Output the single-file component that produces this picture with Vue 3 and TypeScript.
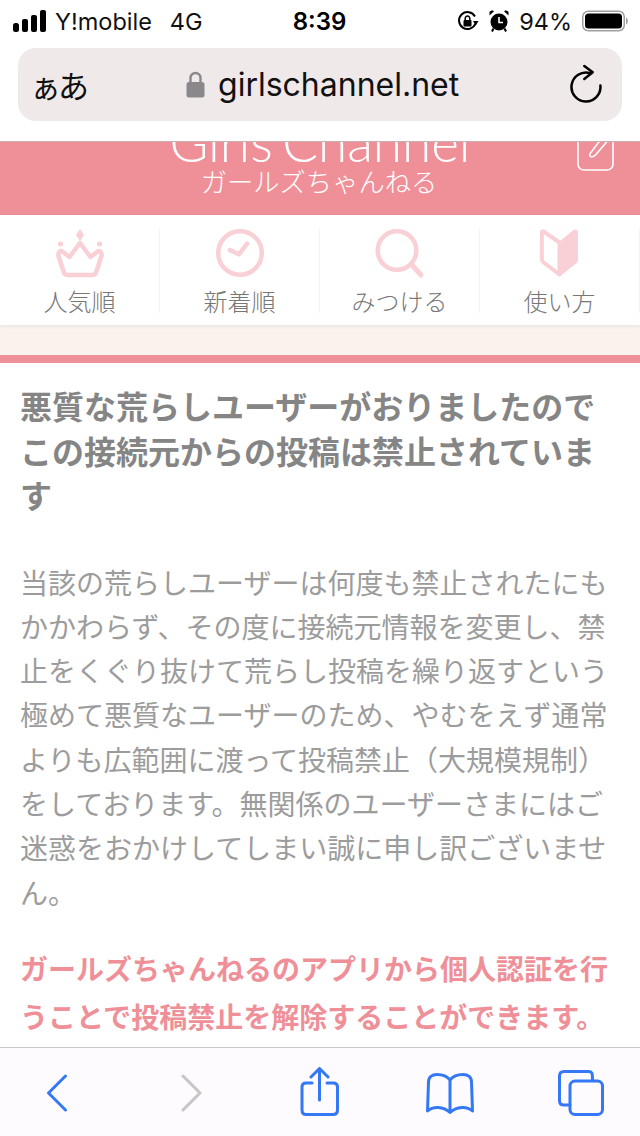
<script setup lang="ts">
const navItems = [
  { label: '人気順', icon: 'crown' },
  { label: '新着順', icon: 'clock' },
  { label: 'みつける', icon: 'search' },
  { label: '使い方', icon: 'guide' },
]
</script>

<template>
  <div class="page">
    <div class="browser-top">
      <div class="status">
        <div class="status-left">
          <svg class="signal" width="34" height="22" viewBox="0 0 34 22" fill="#000">
            <rect x="0" y="13" width="6" height="9" rx="2.500" />
            <rect x="9" y="9" width="6" height="13" rx="2" />
            <rect x="18" y="5" width="6" height="17" rx="2" />
            <rect x="27" y="0" width="6" height="22" rx="2" />
          </svg>
          <span class="carrier">Y!mobile</span>
          <span class="net">4G</span>
        </div>
        <div class="time">8:39</div>
        <div class="status-right">
          <svg width="22" height="22" viewBox="0 0 22 22" fill="none">
            <path d="M18.500 13.500A8.500 8.500 0 1 1 18 6.500" stroke="#000" stroke-width="2" />
            <path d="M16 11h5.500L18.800 15.500z" fill="#000" />
            <rect x="6.500" y="10" width="8" height="6.500" rx="1" fill="#000" />
            <path d="M8.200 10V8.400a2.300 2.300 0 0 1 4.600 0V10" stroke="#000" stroke-width="1.500" />
          </svg>
          <svg class="alarm" width="20" height="22" viewBox="0 0 20 22">
            <circle cx="10" cy="12" r="8.500" fill="#000" />
            <path d="M0.500 5.500 5 1.200 3.200 0.300 0.500 1.800zM19.500 5.500 15 1.200 16.800 0.300 19.500 1.800z" fill="#000" />
            <path d="M10 7V12.500H14" stroke="#fff" stroke-width="1.600" fill="none" />
            <path d="M4.500 18.500 3 21.500M15.500 18.500 17 21.500" stroke="#000" stroke-width="2" />
          </svg>
          <span class="pct">94%</span>
          <svg width="47" height="22" viewBox="0 0 47 22" fill="none">
            <rect x="0.750" y="1.250" width="41.500" height="19.500" rx="5.500" stroke="#a0a0a0" stroke-width="1.500" />
            <rect x="3" y="3.500" width="37" height="15" rx="3.500" fill="#000" />
            <path d="M44 7.500c1.200.4 1.800 1.800 1.800 3.500s-.6 3.100-1.800 3.500z" fill="#a0a0a0" />
          </svg>
        </div>
      </div>
      <div class="urlbar">
        <span class="aa">ぁあ</span>
        <div class="address">
          <svg width="19" height="27" viewBox="0 0 19 27" fill="none">
            <path d="M4.500 12V7a5 5 0 0 1 10 0v5" stroke="#8a888b" stroke-width="2.400" />
            <rect x="0.500" y="11" width="18" height="15.500" rx="2.500" fill="#8a888b" />
          </svg>
          <span class="domain">girlschannel.net</span>
        </div>
        <svg class="reload" width="32" height="41" viewBox="0 0 32 41" fill="none">
          <path d="M30.400 21.500A14.500 14.500 0 1 1 20 9" stroke="#000" stroke-width="2.500" stroke-linecap="round" />
          <path d="M14.300 2 22.700 8.300 14.300 15" stroke="#000" stroke-width="2.500" stroke-linecap="round" stroke-linejoin="round" />
        </svg>
      </div>
    </div>

    <header class="site-header">
      <div class="logo-block">
        <div class="logo-en">Girls Channel</div>
        <div class="logo-ja">ガールズちゃんねる</div>
      </div>
      <svg class="post-icon" width="38" height="60" viewBox="0 0 38 60" fill="none">
        <rect x="1" y="19" width="35" height="39" rx="6" stroke="#fff" stroke-width="1.600" />
        <path d="M13.500 44.500C12.500 44 12.500 42.500 13.500 41L28 22 33 26 18.500 43C17 44.500 15 45 13.500 44.500Z" stroke="#fff" stroke-width="1.600" stroke-linejoin="round" />
      </svg>
    </header>

    <nav class="site-nav">
      <div v-for="item in navItems" :key="item.label" class="nav-item">
        <svg class="nav-icon" width="50" height="50" viewBox="0 0 50 50" fill="none">
          <template v-if="item.icon === 'crown'">
            <path d="M25 0 29 6 25 12 21 6z" fill="#f8d0d5" />
            <circle cx="5.500" cy="15" r="2.500" fill="#f8d0d5" />
            <circle cx="44.500" cy="15" r="2.500" fill="#f8d0d5" />
            <path d="M13 46C10 46 8.800 44.500 8.400 42L3.500 27C2.800 23 5.500 21 8 23L14.500 28 25 14 35.500 28 42 23C44.500 21 47.200 23 46.500 27L41.600 42C41.200 44.500 40 46 37 46Z" stroke="#f8d0d5" stroke-width="4.500" stroke-linejoin="round" />
          </template>
          <template v-else-if="item.icon === 'clock'">
            <circle cx="25" cy="24" r="21.800" stroke="#f8d0d5" stroke-width="4.500" />
            <path d="M14.800 21 23.800 25.300 32.200 14.700" stroke="#f8d0d5" stroke-width="4.500" stroke-linecap="round" stroke-linejoin="round" />
          </template>
          <template v-else-if="item.icon === 'search'">
            <circle cx="22" cy="21.500" r="19.300" stroke="#f8d0d5" stroke-width="4.500" />
            <path d="M37.200 36.300 46 46" stroke="#f8d0d5" stroke-width="5" stroke-linecap="round" />
          </template>
          <template v-else>
            <path d="M8.500 2.500 24.500 13.500V45.500L8 33C7 32 6.800 31 6.800 29.500V4.500C6.800 2.500 7.500 2 8.500 2.500Z" stroke="#f8d0d5" stroke-width="4" stroke-linejoin="round" />
            <path d="M24 13 38.500 1C41 -0.500 43 1 43 3.500V30C43 32 42.500 33 41 34.500L24 48Z" fill="#f8d0d5" />
          </template>
        </svg>
        <span class="nav-label">{{ item.label }}</span>
      </div>
    </nav>

    <div class="band"></div>

    <main class="content">
      <h1 class="title">悪質な荒らしユーザーがおりましたのでこの接続元からの投稿は禁止されています</h1>
      <p class="body">当該の荒らしユーザーは何度も禁止されたにもかかわらず、その度に接続元情報を変更し、禁止をくぐり抜けて荒らし投稿を繰り返すという極めて悪質なユーザーのため、やむをえず通常よりも広範囲に渡って投稿禁止（大規模規制）をしております。無関係のユーザーさまにはご迷惑をおかけしてしまい誠に申し訳ございません。</p>
      <p class="notice">ガールズちゃんねるのアプリから個人認証を行うことで投稿禁止を解除することができます。</p>
    </main>

    <footer class="toolbar">
      <svg width="22" height="38" viewBox="0 0 22 38" fill="none">
        <path d="M19.500 2 2.500 19 19.500 36" stroke="#3478f6" stroke-width="3" stroke-linecap="round" stroke-linejoin="round" />
      </svg>
      <svg width="22" height="38" viewBox="0 0 22 38" fill="none">
        <path d="M2 2 19 19 2 36" stroke="#c9c5c4" stroke-width="3" stroke-linecap="round" stroke-linejoin="round" />
      </svg>
      <svg width="40" height="50" viewBox="0 0 40 50" fill="none">
        <path d="M12 16H6C3.500 16 2 17.500 2 20V43C2 46 3.500 47.500 6 47.500H33C36 47.500 37.500 46 37.500 43V20C37.500 17.500 36 16 33 16H27" stroke="#3478f6" stroke-width="3" stroke-linecap="round" />
        <path d="M19.500 33V2M11 10 19.500 1.500 28 10" stroke="#3478f6" stroke-width="3" stroke-linecap="round" stroke-linejoin="round" />
      </svg>
      <svg width="48" height="41" viewBox="0 0 48 41" fill="none">
        <path d="M24 7C21 3 16 1.500 11 1.500C6 1.500 2.500 4 2.500 9L1.500 38C7 33 17 33 24 39.500C31 33 41 33 46.500 38L45.500 9C45.500 4 42 1.500 37 1.500C32 1.500 27 3 24 7ZM24 7V39.500" stroke="#3478f6" stroke-width="3" stroke-linejoin="round" />
      </svg>
      <svg width="46" height="46" viewBox="0 0 46 46" fill="none">
        <path d="M12 35H6C3 35 1.500 33.500 1.500 31V6C1.500 3 3 1.500 6 1.500H31C34 1.500 34.500 3 34.500 10" stroke="#3478f6" stroke-width="3" stroke-linecap="round" />
        <rect x="12" y="11" width="32.500" height="33.500" rx="5" stroke="#3478f6" stroke-width="3" />
      </svg>
    </footer>
  </div>
</template>

<style>
html, body { margin: 0; background: #fff; }
</style>

<style scoped>
.page {
  width: 640px;
  height: 1136px;
  display: flex;
  flex-direction: column;
  overflow: hidden;
  background: #fff;
  font-family: "Noto Sans CJK JP", "Liberation Sans", sans-serif;
}
.browser-top { height: 141px; flex: none; background: #fff; }
.status {
  height: 42px;
  display: grid;
  grid-template-columns: 1fr auto 1fr;
  align-items: center;
  padding: 0 11px 0 13px;
  font-family: "Inter", "Liberation Sans", sans-serif;
  font-size: 23.500px;
  color: #111;
}
.status-left { display: flex; align-items: center; }
.carrier { margin-left: 8px; }
.net { margin-left: 18px; }
.time { font-weight: 600; font-size: 24px; color: #000; margin-left: -3px; }
.status-right { display: flex; align-items: center; justify-content: flex-end; }
.alarm { margin-left: 10px; }
.pct { margin-left: 10px; margin-right: 10px; }
.urlbar {
  margin: 6px 18px 0;
  height: 73px;
  border-radius: 18px;
  background: #f0e9e9;
  display: flex;
  align-items: center;
  padding: 0 20px 0 14px;
}
.aa { font-size: 31px; letter-spacing: -3px; color: #111; width: 154px; flex: none; margin-left: -2px; margin-right: 2px; }
.address { display: flex; align-items: center; gap: 13px; flex: 1; }
.domain { font-family: "Inter", "Liberation Sans", sans-serif; font-size: 32px; color: #111; }
.site-header {
  height: 74px;
  flex: none;
  box-sizing: border-box;
  border-top: 1px solid #c4b0b2;
  background: #ef9099;
  position: relative;
  overflow: hidden;
  display: flex;
  justify-content: center;
}
.logo-block { margin-top: -23px; text-align: center; color: #fff; }
.logo-en {
  font-family: "Lato", "Inter", sans-serif;
  font-weight: 300;
  font-size: 53px;
  word-spacing: -5px;
  line-height: 46px;
  white-space: nowrap;
}
.logo-ja { font-size: 26.300px; line-height: 30px; font-weight: 300; margin-top: 1px; margin-left: -2px; }
.post-icon { position: absolute; left: 577px; top: -30px; }
.site-nav {
  height: 110px;
  flex: none;
  display: grid;
  grid-template-columns: repeat(4, 160px);
  padding-top: 14px;
  box-sizing: border-box;
  background: #fff;
  position: relative;
  box-shadow: 0 1px 4px rgba(0, 0, 0, 0.07);
}
.nav-item {
  height: 84px;
  display: flex;
  flex-direction: column;
  align-items: center;
  border-right: 1px solid #f6f3f3;
  box-sizing: border-box;
}
.nav-icon { flex: none; }
.nav-label { font-size: 24px; line-height: 30px; margin-top: 7px; color: #777; font-weight: 300; }
.band {
  height: 38px;
  flex: none;
  box-sizing: border-box;
  background: #faf2ed;
  border-bottom: 8px solid #ef9099;
}
.content { flex: 1; min-height: 0; padding: 20px 20px 0; overflow: hidden; }
.title { margin: 0; font-size: 32px; line-height: 44.500px; font-weight: 700; color: #858585; }
.body { margin: 43px 0 0; font-size: 28px; line-height: 44.300px; color: #9c9c9c; font-weight: 400; }
.notice { margin: 30px 0 0; font-size: 28px; line-height: 48px; font-weight: 700; color: #ef9099; }
.toolbar {
  height: 89px;
  flex: none;
  box-sizing: border-box;
  border-top: 1px solid #c8c8c8;
  background: #fdfbfd;
  position: relative;
}
.toolbar svg { position: absolute; }
.toolbar svg:nth-child(1) { left: 46px; top: 26px; }
.toolbar svg:nth-child(2) { left: 181px; top: 26px; }
.toolbar svg:nth-child(3) { left: 300px; top: 19px; }
.toolbar svg:nth-child(4) { left: 426px; top: 25px; }
.toolbar svg:nth-child(5) { left: 558px; top: 22px; }
</style>
